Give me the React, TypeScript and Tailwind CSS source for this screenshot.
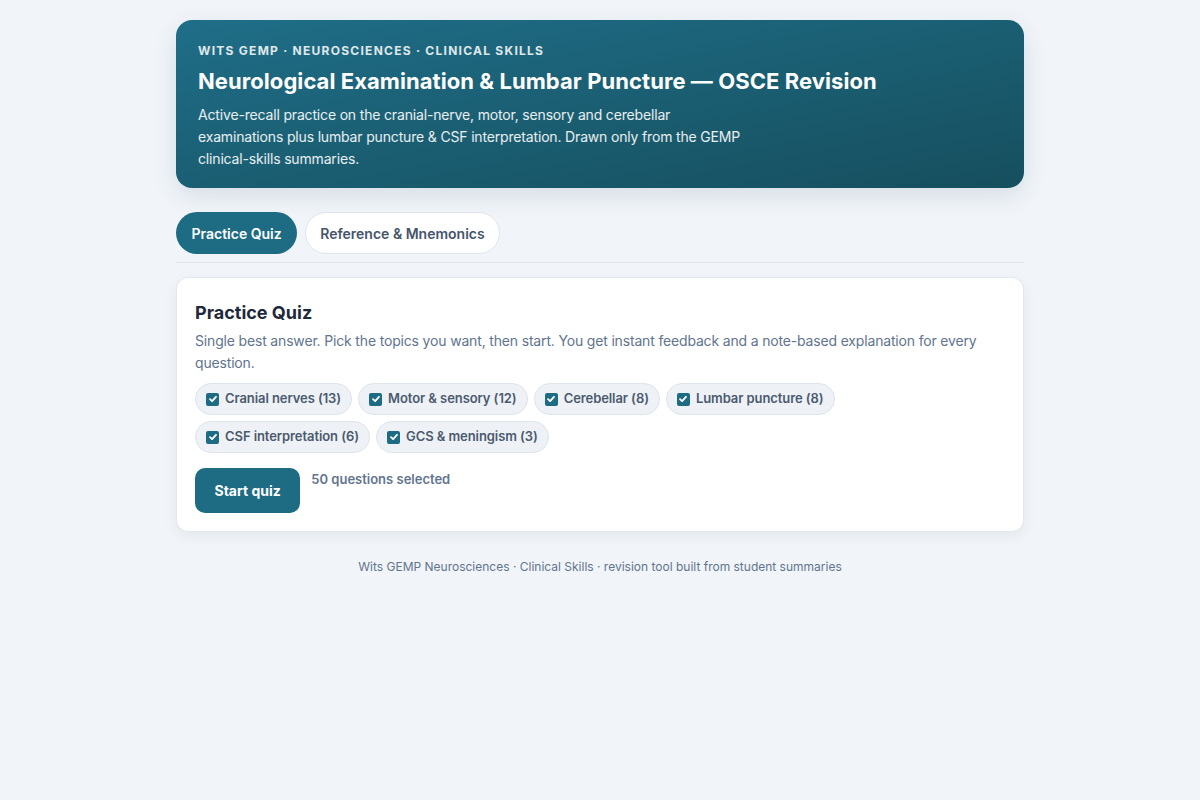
import { useState } from "react";

const topics = [
  { id: "cn", label: "Cranial nerves", count: 13 },
  { id: "ms", label: "Motor & sensory", count: 12 },
  { id: "cb", label: "Cerebellar", count: 8 },
  { id: "lp", label: "Lumbar puncture", count: 8 },
  { id: "csf", label: "CSF interpretation", count: 6 },
  { id: "gcs", label: "GCS & meningism", count: 3 },
];

function Check({ on }: { on: boolean }) {
  return (
    <span
      className={`w-[13px] h-[13px] rounded-[2px] flex items-center justify-center ${
        on ? "bg-[#1e6b84]" : "bg-white border border-slate-400"
      }`}
    >
      {on && (
        <svg width="10" height="10" viewBox="0 0 10 10" fill="none">
          <path d="M2 5.2 L4.1 7.2 L8 2.8" stroke="white" strokeWidth="1.8" strokeLinecap="round" strokeLinejoin="round" />
        </svg>
      )}
    </span>
  );
}

export default function App() {
  const [tab, setTab] = useState("quiz");
  const [sel, setSel] = useState<string[]>(topics.map((t) => t.id));

  const total = topics.filter((t) => sel.includes(t.id)).reduce((a, t) => a + t.count, 0);

  return (
    <div className="min-h-[800px] bg-[#f1f5f9] font-['Inter',sans-serif] text-[#1e293b]">
      <div className="w-[848px] mx-auto pt-5">
        <header className="rounded-2xl bg-gradient-to-br from-[#1f6e88] to-[#164f5e] px-[22px] pt-[23px] pb-[18px] text-white shadow-[0_8px_24px_rgba(15,60,80,0.12)]">
          <div className="text-[12px] font-bold tracking-[0.105em] uppercase text-white/85 leading-[16px]">
            Wits GEMP · Neurosciences · Clinical Skills
          </div>
          <h1 className="mt-[7px] text-[22px] font-bold leading-[30px] tracking-[0.003em]">
            Neurological Examination &amp; Lumbar Puncture — OSCE Revision
          </h1>
          <p className="mt-[8px] max-w-[560px] text-[14px] leading-[22px] tracking-[-0.012em] text-white/90">
            Active-recall practice on the cranial-nerve, motor, sensory and cerebellar examinations plus lumbar
            puncture &amp; CSF interpretation. Drawn only from the GEMP clinical-skills summaries.
          </p>
        </header>

        <nav className="mt-6 flex gap-2 pb-2 border-b border-[#dfe5ec]">
          <button
            onClick={() => setTab("quiz")}
            className={`h-[42px] px-[15.5px] rounded-full text-[14px] font-semibold ${
              tab === "quiz" ? "bg-[#1e6b84] text-white" : "bg-white text-slate-600 border border-[#dfe5ec]"
            }`}
          >
            Practice Quiz
          </button>
          <button
            onClick={() => setTab("ref")}
            className={`h-[42px] px-[14px] rounded-full text-[14px] font-semibold ${
              tab === "ref" ? "bg-[#1e6b84] text-white" : "bg-white text-slate-600 border border-[#dfe5ec]"
            }`}
          >
            Reference &amp; Mnemonics
          </button>
        </nav>

        <section className="mt-[14px] rounded-xl bg-white border border-[#e2e8f0] px-[18px] pt-[22px] pb-[18px] shadow-[0_4px_14px_rgba(15,23,42,0.06)]">
          <h2 className="text-[18px] font-bold leading-[26px] text-[#1e293b]">Practice Quiz</h2>
          <p className="mt-[4px] text-[14px] leading-[22px] tracking-[-0.012em] text-slate-500">
            Single best answer. Pick the topics you want, then start. You get instant feedback and a note-based
            explanation for every question.
          </p>
          <div className="mt-[9px] flex flex-wrap gap-x-[6px] gap-y-[6px]">
            {topics.map((t) => {
              const on = sel.includes(t.id);
              return (
                <label
                  key={t.id}
                  onClick={() => setSel(on ? sel.filter((s) => s !== t.id) : [...sel, t.id])}
                  className="h-[32px] flex items-center gap-[6px] px-[10px] rounded-full bg-[#eef2f7] border border-[#dde4ec] text-[13px] font-semibold tracking-[-0.006em] text-[#4b5a6e] cursor-pointer select-none"
                >
                  <Check on={on} />
                  {t.label} ({t.count})
                </label>
              );
            })}
          </div>
          <div className="mt-[15px] flex items-start gap-[11px]">
            <button className="h-[45px] px-[19.5px] rounded-[10px] bg-[#1e6b84] text-white text-[14px] font-bold">
              Start quiz
            </button>
            <span className="mt-[2px] text-[13px] font-semibold text-slate-500">{total} questions selected</span>
          </div>
        </section>

        <footer className="mt-[26px] text-center text-[12px] text-slate-500">
          Wits GEMP Neurosciences · Clinical Skills · revision tool built from student summaries
        </footer>
      </div>
    </div>
  );
}
